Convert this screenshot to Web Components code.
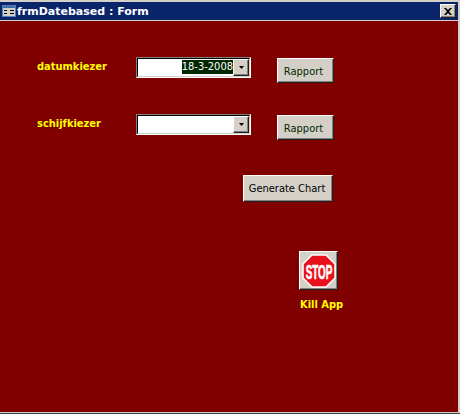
<!DOCTYPE html>
<html>
<head>
<meta charset="utf-8">
<style>
  html, body { margin: 0; padding: 0; background: #800000; }
  body { width: 460px; height: 414px; overflow: hidden; }
</style>
</head>
<body>
<frm-window caption="frmDatebased : Form">
  <frm-row top="36" label="datumkiezer">
    <frm-combo value="18-3-2008"></frm-combo>
    <frm-button style="margin-left:26px;width:57px;height:25px;margin-top:1px;padding:1px 4px 0 0" color="#002800">Rapport</frm-button>
  </frm-row>
  <frm-row top="31" label="schijfkiezer">
    <frm-combo></frm-combo>
    <frm-button style="margin-left:26px;width:57px;height:25px;margin-top:1px;padding:1px 4px 0 0" color="#002800">Rapport</frm-button>
  </frm-row>
  <frm-actions></frm-actions>
</frm-window>

<script>
// 3d raised edge used by all the access buttons
const raised = `
  background: #d4d0c8;
  border-style: solid;
  border-width: 1px;
  border-color: #fff #202020 #202020 #fff;
  box-shadow: inset -1px -1px 0 #808080;
  box-sizing: border-box;
`;

class FrmWindow extends HTMLElement {
  constructor() {
    super();
    this.attachShadow({ mode: "open" });
    this.shadowRoot.innerHTML = `
    <style>
      :host { display: flex; flex-direction: column; width: 460px; height: 414px; box-sizing: border-box; background: #d4d0c8; font-family: "DejaVu Sans", sans-serif; }
      .title { display: flex; align-items: center; height: 18px; margin: 2px 2px 1px 0; padding: 0 2px 0 2px; background: #0a246a; color: #fff; font: bold 11px "DejaVu Sans", sans-serif; }
      .title svg { margin-right: 1px; flex: none; }
      .title span { flex: 1; white-space: nowrap; }
      .close { ${raised} width: 16px; height: 14px; display: flex; align-items: center; justify-content: center; }
      .body { flex: 1; background: #800000; margin-right: 2px; }
      .foot { height: 1px; background: #d4d0c8; }
      .foot2 { height: 1px; background: #404040; }
    </style>
    <div class="title">
      <svg width="14" height="14" viewBox="0 0 14 14">
        <rect x="0.5" y="1.5" width="13" height="11" fill="#d4d0c8" stroke="#5c7cc0"/>
        <rect x="1" y="2" width="12" height="2" fill="#3a6ea5"/>
        <path d="M2 6h3v1H2zM2 9h3v1H2zM8 6h4v1H8zM8 9h4v1H8z" fill="#000"/>
      </svg>
      <span id="cap"></span>
      <div class="close">
        <svg width="8" height="7" viewBox="0 0 8 7"><path d="M0 0h2l2 2 2-2h2L5 3.5 8 7H6L4 5 2 7H0l3-3.5z" fill="#000"/></svg>
      </div>
    </div>
    <div class="body"><slot></slot></div>
    <div class="foot"></div>
    <div class="foot2"></div>`;
    this.shadowRoot.getElementById("cap").textContent = this.getAttribute("caption");
  }
}
customElements.define("frm-window", FrmWindow);

class FrmRow extends HTMLElement {
  constructor() {
    super();
    this.attachShadow({ mode: "open" });
    this.shadowRoot.innerHTML = `
    <style>
      :host { display: flex; align-items: flex-start; padding-left: 37px; }
      .lbl { width: 99px; color: #ffff00; font: bold 11px "DejaVu Sans", sans-serif; font-stretch: condensed; line-height: 14px; margin-top: 3px; white-space: nowrap; }
    </style>
    <div class="lbl" id="lbl"></div>
    <slot></slot>`;
    this.shadowRoot.getElementById("lbl").textContent = this.getAttribute("label");
    this.style.marginTop = this.getAttribute("top") + "px";
  }
}
customElements.define("frm-row", FrmRow);

class FrmCombo extends HTMLElement {
  constructor() {
    super();
    this.attachShadow({ mode: "open" });
    this.shadowRoot.innerHTML = `
    <style>
      :host { display: flex; width: 115px; height: 21px; box-sizing: border-box; border-style: solid; border-width: 1px; border-color: #808080 #fff #fff #808080; background: #fff; }
      .in { flex: 1; display: flex; border-style: solid; border-width: 1px; border-color: #000 #d4d0c8 #d4d0c8 #000; background: #fff; }
      .val { flex: 1; display: flex; justify-content: flex-end; align-items: flex-start; padding-top: 1px; }
      .sel { background: #002800; color: #fff; font: 11px "DejaVu Sans", sans-serif; font-stretch: condensed; height: 14px; line-height: 14px; padding: 0; white-space: nowrap; }
      .btn { ${raised} width: 16px; height: 17px; display: flex; align-items: center; justify-content: center; }
    </style>
    <div class="in">
      <div class="val"><span class="sel" id="v"></span></div>
      <div class="btn"><svg width="5" height="3" viewBox="0 0 5 3"><path d="M0 0h5L2.5 3z" fill="#000"/></svg></div>
    </div>`;
    this.shadowRoot.getElementById("v").textContent = this.getAttribute("value") || "";
  }
}
customElements.define("frm-combo", FrmCombo);

class FrmButton extends HTMLElement {
  constructor() {
    super();
    this.attachShadow({ mode: "open" });
    this.shadowRoot.innerHTML = `
    <style>
      :host { display: flex; align-items: center; justify-content: center; ${raised} font: 11px "DejaVu Sans", sans-serif; font-stretch: condensed; color: #000; white-space: nowrap; flex: none; padding-right: 2px; }
    </style>
    <slot></slot>`;
    if (this.getAttribute("color")) this.style.color = this.getAttribute("color");
  }
}
customElements.define("frm-button", FrmButton);

class FrmActions extends HTMLElement {
  constructor() {
    super();
    this.attachShadow({ mode: "open" });
    this.shadowRoot.innerHTML = `
    <style>
      :host { display: flex; flex-direction: column; }
      .gen { margin: 35px 0 0 243px; width: 90px; height: 27px; }
      .stop { margin: 49px 0 0 299px; width: 39px; height: 39px; padding: 0; }
      svg { display: block; }
      .kill { margin: 8px 0 0 300px; color: #ffff00; font: bold 11px "DejaVu Sans", sans-serif; font-stretch: condensed; line-height: 14px; white-space: nowrap; }
    </style>
    <frm-button class="gen">Generate Chart</frm-button>
    <frm-button class="stop">
      <svg width="34" height="34" viewBox="0 0 34 34">
        <path d="M10 1h14l9 9v14l-9 9H10l-9-9V10z" fill="#e8101c" stroke="#fff" stroke-width="1.5"/>
        <text transform="translate(17 24.5) scale(.47 1)" text-anchor="middle" fill="#fff" stroke="#fff" stroke-width=".7" font-family="Liberation Sans" font-weight="bold" font-size="21">STOP</text>
      </svg>
    </frm-button>
    <div class="kill">Kill App</div>`;
  }
}
customElements.define("frm-actions", FrmActions);
</script>
</body>
</html>
